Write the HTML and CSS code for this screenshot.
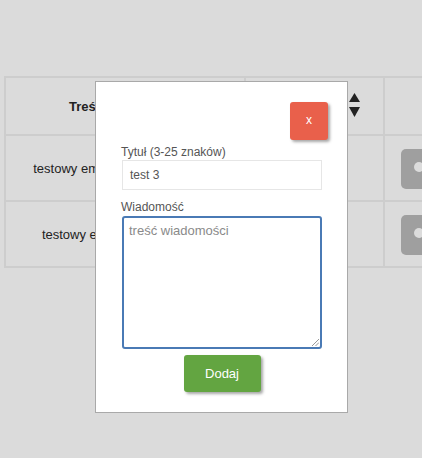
FILE: index.html
```html
<!DOCTYPE html>
<html lang="pl">
<head>
<meta charset="utf-8">
<title>Wiadomości</title>
<link rel="stylesheet" href="styles.css">
</head>
<body>
<div class="page">
  <div class="table">
    <div class="cell head">Treść wiadomości</div>
    <div class="cell head sort">
      <svg class="arrows" width="11" height="24" viewBox="0 0 11 24"><polygon points="5.5,0 11,9 0,9" fill="#222"/><polygon points="0,14 11,14 5.5,24" fill="#222"/></svg>
    </div>
    <div class="cell head"></div>

    <div class="cell">testowy email do użytkowników.</div>
    <div class="cell"></div>
    <div class="cell act"><span class="toggle"><span class="dot"></span></span></div>

    <div class="cell">testowy email do wszystkich.</div>
    <div class="cell"></div>
    <div class="cell act"><span class="toggle"><span class="dot"></span></span></div>
  </div>
</div>

<div class="modal">
  <button class="close">x</button>
  <div class="form">
    <label class="label">Tytuł (3-25 znaków)</label>
    <div class="input">test 3</div>
    <label class="label label2">Wiadomość</label>
    <div class="textarea">
      <span class="placeholder">treść wiadomości</span>
      <svg class="grip" width="8" height="8" viewBox="0 0 8 8"><line x1="1" y1="8" x2="8" y2="1" stroke="#999" stroke-width="1"/><line x1="4.5" y1="8" x2="8" y2="4.5" stroke="#999" stroke-width="1"/></svg>
    </div>
    <button class="add">Dodaj</button>
  </div>
</div>
</body>
</html>
```

FILE: styles.css
```css
html, body {
  margin: 0;
  height: 100%;
}
body {
  background: #dbdbdb;
  font-family: "Liberation Sans", Arial, sans-serif;
  overflow: hidden;
  position: relative;
}
.page {
  padding: 76px 0 0 4px;
}
.table {
  display: grid;
  grid-template-columns: 238px 137px 60px;
  grid-template-rows: 56px 64px 64px;
  gap: 2px;
  padding: 2px;
  background: #cdcdcd;
  width: max-content;
}
.cell {
  background: #dbdbdb;
  display: flex;
  align-items: center;
  justify-content: center;
  font-size: 13px;
  color: #222;
  white-space: nowrap;
  overflow: hidden;
}
.head {
  font-weight: bold;
}
.sort {
  justify-content: flex-end;
  padding-right: 23px;
}
.arrows {
  display: block;
  margin-top: -2px;
}
.act {
  justify-content: flex-start;
  padding-left: 16px;
}
.toggle {
  display: block;
  width: 44px;
  height: 40px;
  border-radius: 5px;
  background: #9f9f9f;
  position: relative;
  margin-top: 2px;
}
.dot {
  position: absolute;
  left: 13px;
  top: 13px;
  width: 10px;
  height: 10px;
  border-radius: 50%;
  background: #dcdcdc;
}
.modal {
  position: absolute;
  left: 95px;
  top: 81px;
  width: 253px;
  height: 332px;
  box-sizing: border-box;
  border: 1px solid #a9a9a9;
  background: #fff;
  padding: 20px 19px 0 26px;
  display: flex;
  flex-direction: column;
}
.close {
  align-self: flex-end;
  width: 38px;
  height: 38px;
  border: none;
  border-radius: 3px;
  background: #e9604b;
  color: #fff;
  font-family: "Liberation Sans", Arial, sans-serif;
  font-size: 12px;
  padding: 0 0 2px;
  box-shadow: 2px 2px 3px rgba(0,0,0,0.35);
}
.form {
  width: 200px;
  display: flex;
  flex-direction: column;
}
.label {
  font-size: 12px;
  line-height: 14px;
  color: #555;
  margin: 5px 0 1px -1px;
}
.label2 {
  margin-top: 10px;
  margin-bottom: 2px;
}
.input {
  height: 30px;
  box-sizing: border-box;
  border: 1px solid #e6e6e6;
  padding: 0 7px;
  font-size: 12px;
  color: #555;
  display: flex;
  align-items: center;
}
.textarea {
  height: 133px;
  box-sizing: border-box;
  border: 2px solid #4a7ab5;
  border-radius: 3px;
  padding: 5px;
  font-size: 13px;
  line-height: 15px;
  position: relative;
}
.placeholder {
  color: #8a8a8a;
}
.grip {
  position: absolute;
  right: 1px;
  bottom: 1px;
}
.add {
  align-self: center;
  margin-top: 6px;
  width: 77px;
  height: 37px;
  border: none;
  border-radius: 3px;
  background: #63a541;
  color: #fff;
  font-family: "Liberation Sans", Arial, sans-serif;
  font-size: 13px;
  box-shadow: 2px 2px 3px rgba(0,0,0,0.35);
}
```
